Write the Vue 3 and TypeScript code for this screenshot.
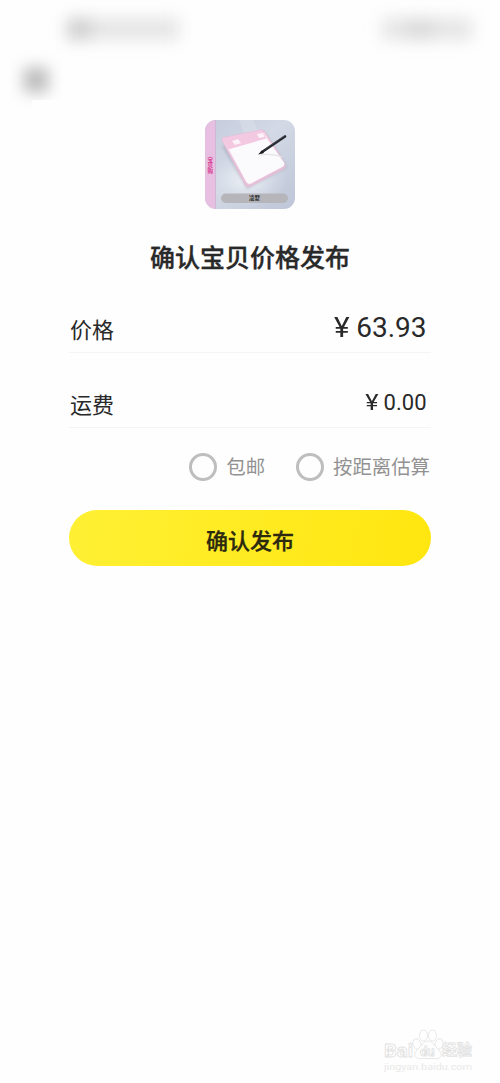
<script setup lang="ts">
import { ref } from 'vue'

interface PriceRow {
  label: string
  amount: string
  large: boolean
}

const rows: PriceRow[] = [
  { label: '价格', amount: '63.93', large: true },
  { label: '运费', amount: '0.00', large: false },
]
const options: string[] = ['包邮', '按距离估算']
const selected = ref<string | null>(null)
</script>

<template>
  <main class="page">
    <header class="header">
      <div class="status">
        <div class="haze left"><i></i></div>
        <div class="haze right"><i></i></div>
      </div>
      <div class="back"></div>
    </header>

    <svg class="cover" viewBox="0 0 90 89" aria-hidden="true">
      <defs>
        <linearGradient id="bg" x1="0" y1="0" x2="1" y2="1">
          <stop offset="0" stop-color="#c4cbdc" />
          <stop offset=".45" stop-color="#d3d9e5" />
          <stop offset="1" stop-color="#bdc5d7" />
        </linearGradient>
        <radialGradient id="glow">
          <stop offset="0" stop-color="#f0f4f8" />
          <stop offset="1" stop-color="#dce2ec" stop-opacity="0" />
        </radialGradient>
        <clipPath id="round"><rect width="90" height="89" rx="11" /></clipPath>
        <filter id="soft" x="-20%" y="-20%" width="140%" height="140%"><feGaussianBlur stdDeviation="1.4" /></filter>
      </defs>
      <g clip-path="url(#round)">
        <rect width="90" height="89" fill="url(#bg)" />
        <path d="M34 0h14l10 22H42z" fill="#e2e6ee" opacity=".4" />
        <ellipse cx="42" cy="60" rx="40" ry="27" fill="url(#glow)" />
        <rect width="10.5" height="89" fill="#e7bfe0" />
        <path d="M10.5 0v89" stroke="#cdb2d2" stroke-width=".8" />
        <text class="spine" x="5.2" y="45">宝贝购</text>
        <path d="M17 26L42 69L82 47L61 14z" fill="#8c91a1" opacity=".4" filter="url(#soft)" />
        <path d="M17 21Q15.5 18 19 17L56 9.5Q59 9 60.5 12L80 43Q82 47 79 49L46 66.5Q42 68.5 40 65.5z" fill="#e5bfd8" />
        <path d="M18 21L42 63Q43 65 46 64L77 47Q80 45 79 43L59 12z" fill="#f6dfee" />
        <path d="M24 29L61 18L79 42.500Q80 45 78 46.500L46 63Q43 64.500 41 61.500z" fill="#fbfafc" />
        <path d="M17 18L57 10L61 18.5L23 29.5z" fill="#f3c9e2" />
        <path d="M27 21l6-2 3 4-6 2zM52 14l6-1 1.5 4-5.5 1z" fill="#fcf3f9" />
        <path d="M54 35Q67 33 78 37" fill="none" stroke="#e3e4e6" stroke-width="1.2" />
        <path d="M57 32L80 16.5" stroke="#272930" stroke-width="2.7" stroke-linecap="round" />
        <path d="M53 34.5L57 30.5L59 33z" fill="#17191d" />
        <path d="M60 29L79 16" stroke="#60626b" stroke-width=".6" />
        <rect x="16" y="73.5" width="67" height="9.5" rx="4.75" fill="#b5b5ba" />
        <text class="caption" x="49.5" y="80.2">凌墅</text>
      </g>
    </svg>

    <h1 class="title">确认宝贝价格发布</h1>

    <section class="form">
      <div v-for="row in rows" :key="row.label" class="row">
        <span class="label">{{ row.label }}</span>
        <span class="amount" :class="{ large: row.large }"><span class="yen">¥</span> {{ row.amount }}</span>
      </div>
      <div class="options">
        <button
          v-for="option in options"
          :key="option"
          class="option"
          :class="{ on: selected === option }"
          @click="selected = option"
        >
          <span class="radio"></span><span class="name">{{ option }}</span>
        </button>
      </div>
      <button class="submit">确认发布</button>
    </section>

    <svg class="mark" viewBox="0 0 94 48" aria-hidden="true">
      <g class="paw">
        <ellipse cx="36" cy="19" rx="4" ry="5.3" transform="rotate(-18 36 19)" />
        <ellipse cx="42.5" cy="10.5" rx="4" ry="5.5" />
        <ellipse cx="51.5" cy="10.5" rx="4" ry="5.5" />
        <ellipse cx="58" cy="19" rx="4" ry="5.3" transform="rotate(18 58 19)" />
        <path d="M47 16C42 16 40 22 36 25C31 30 35 35 41 33.5H53C59 35 63 30 58 25C54 22 52 16 47 16z" />
      </g>
      <text class="brand" x="3" y="31.5" textLength="29" lengthAdjust="spacingAndGlyphs">Bai</text>
      <text class="du" x="39" y="30.5">du</text>
      <text class="exp" x="61" y="29.5" textLength="30" lengthAdjust="spacingAndGlyphs">经验</text>
      <text class="site" x="3" y="44.5" textLength="88" lengthAdjust="spacingAndGlyphs">jingyan.baidu.com</text>
    </svg>
  </main>
</template>

<style>
body {
  background: #fefefe;
}
</style>

<style scoped>
.page {
  position: relative;
  box-sizing: border-box;
  width: 500px;
  height: 1083px;
  overflow: hidden;
  display: flex;
  flex-direction: column;
  align-items: center;
  background: #fefefe;
  color: #292929;
  font-family: Roboto, "Noto Sans CJK SC", sans-serif;
}
.header {
  width: 100%;
  height: 110px;
  flex: none;
  box-sizing: border-box;
  padding: 18px 28px 0 67px;
  clip-path: polygon(0 0, 100% 0, 100% 100px, 32px 100px, 32px 100%, 0 100%);
}
.status {
  display: flex;
  justify-content: space-between;
}
.haze {
  height: 22px;
  background: #e5e5e5;
  filter: blur(8px);
}
.haze i {
  display: block;
  height: 22px;
  background: #cecece;
}
.left {
  width: 112px;
}
.left i {
  width: 24px;
}
.right {
  width: 90px;
}
.right i {
  width: 28px;
  margin-left: 24px;
  background: #dadada;
}
.back {
  width: 24px;
  height: 24px;
  margin: 28px 0 0 -43px;
  background: #b6b6b6;
  filter: blur(8px);
}
.cover {
  width: 90px;
  height: 89px;
  margin-top: 10px;
  flex: none;
}
.spine {
  writing-mode: vertical-rl;
  text-anchor: middle;
  font-size: 5.5px;
  font-weight: 700;
  fill: #d83b91;
}
.caption {
  text-anchor: middle;
  font-size: 5.5px;
  font-weight: 700;
  fill: #333;
}
.title {
  margin: 32px 0 0;
  font-size: 25px;
  line-height: 36px;
  font-weight: 500;
  -webkit-text-stroke: 0.35px currentColor;
}
.form {
  width: 362px;
  margin-top: 1px;
}
.row {
  height: 75px;
  box-sizing: border-box;
  padding: 27px 4.5px 0 1px;
  border-bottom: 1px solid #f4f4f4;
  display: flex;
  justify-content: space-between;
}
.label {
  font-size: 22px;
  line-height: 51px;
}
.amount {
  font-size: 22px;
  line-height: 46px;
}
.yen {
  display: inline-block;
  transform: scaleX(1.15);
  transform-origin: right;
}
.large {
  font-size: 28px;
  line-height: 45px;
}
.large .yen {
  transform: scaleX(1.06);
}
.options {
  height: 82px;
  display: flex;
  justify-content: flex-end;
  gap: 31px;
  padding-right: 1px;
}
button {
  border: 0;
  padding: 0;
  font-family: inherit;
  color: inherit;
}
.option {
  height: 78px;
  display: flex;
  align-items: center;
  background: none;
  font-size: 19.4px;
  color: #929292;
}
.name {
  padding-bottom: 3px;
}
.radio {
  width: 28px;
  height: 28px;
  box-sizing: border-box;
  margin-right: 9px;
  border: 3px solid #bebebe;
  border-radius: 50%;
}
.on .radio {
  border-color: #ffe716;
}
.submit {
  display: block;
  width: 362px;
  height: 56px;
  padding-top: 7px;
  border-radius: 28px;
  background: linear-gradient(100deg, #fff034, #ffe60f);
  color: #2b290f;
  font-size: 22px;
  line-height: 49px;
  font-weight: 500;
  -webkit-text-stroke: 0.3px currentColor;
}
.mark {
  position: absolute;
  left: 381px;
  top: 1025px;
  width: 94px;
  height: 48px;
  fill: #fefefe;
  stroke: #e2e2e2;
  stroke-width: 0.8;
}
.brand {
  font-size: 19px;
  font-weight: 700;
}
.du {
  font-size: 13px;
  font-weight: 700;
}
.exp {
  font-size: 15px;
  font-weight: 700;
}
.site {
  font-size: 9px;
  fill: #e9e9e9;
  stroke: none;
}
</style>
